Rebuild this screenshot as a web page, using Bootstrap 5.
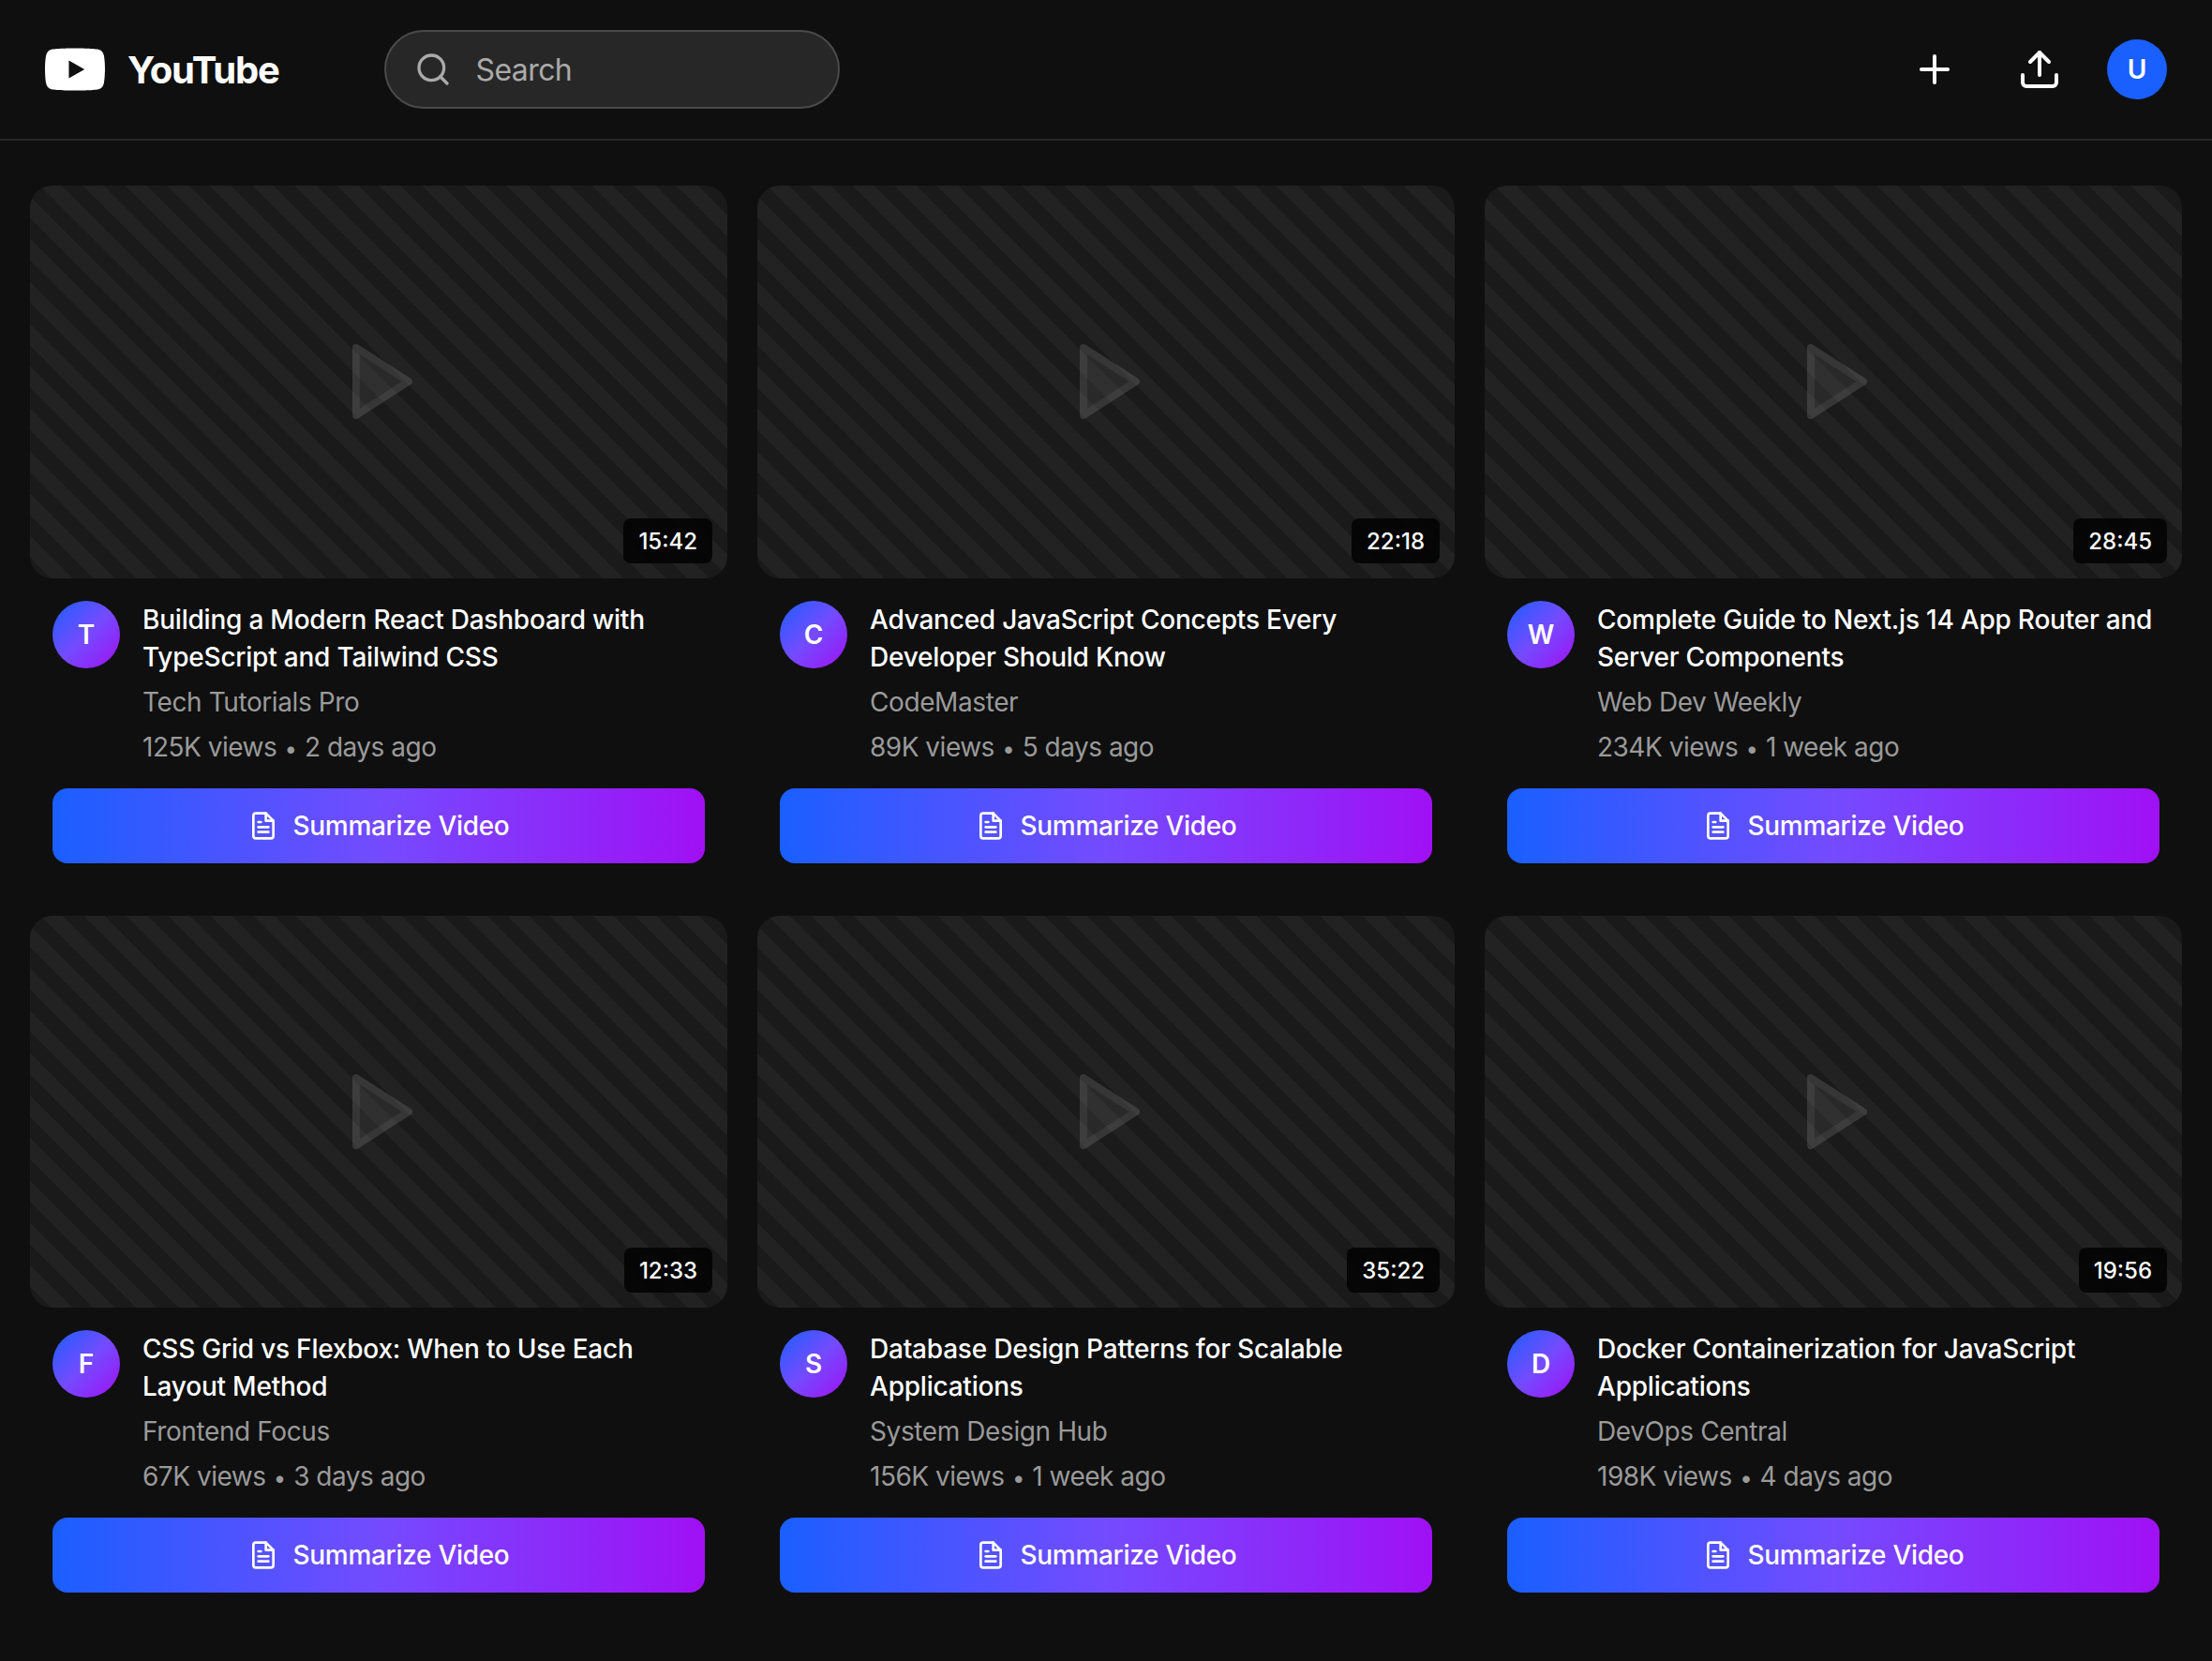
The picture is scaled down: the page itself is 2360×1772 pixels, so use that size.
<!DOCTYPE html>
<html lang="en">
<head>
  <meta charset="UTF-8">
  <title>YouTube</title>
  <link href="https://cdn.jsdelivr.net/npm/bootstrap@5.3.0/dist/css/bootstrap.min.css" rel="stylesheet">
  <style>
    body { background: #0f0f0f; color: #fff; font-family: Inter, "Liberation Sans", sans-serif; }
    .top-bar { height: 150px; padding: 0 48px; border-bottom: 2px solid #272727; }
    .brand-logo { margin-right: 112px; gap: 24px; }
    .brand-name { padding-top: 2px; font-size: 40px; font-weight: 700; letter-spacing: -1.2px; line-height: 1; color: #fff; }
    .search-box { width: 486px; height: 84px; padding: 0 28px 0 30px; gap: 26px; background: #272727; border: 2px solid #4a4a4a; border-radius: 42px; color: #aaa; }
    .search-box .form-control { background: transparent; border: 0; padding: 2px 0 0; font-size: 32px; letter-spacing: -0.6px; color: #fff; box-shadow: none; }
    .search-box .form-control::placeholder { color: #aaa; opacity: 1; }
    .top-actions { gap: 32px; }
    .icon-btn { width: 80px; height: 80px; padding: 16px; background: none; border: 0; color: #fff; line-height: 0; }
    .user-pic { width: 64px; height: 64px; background: #1a5fff; font-size: 28px; font-weight: 600; }
    .video-wrap { padding: 48px 32px 72px; }
    .video-row { --bs-gutter-x: 32px; --bs-gutter-y: 32px; }
    .video-card { background: transparent; border: 0; border-radius: 0; color: #fff; }
    .thumb-box { aspect-ratio: 16 / 9; border-radius: 24px; background: repeating-linear-gradient(45deg, #1a1a1a, #1a1a1a 16px, #222 16px, #222 32px); }
    .play-mark { width: 96px; height: 96px; opacity: .12; fill: #999; stroke: #fff; }
    .time-tag { right: 16px; bottom: 16px; height: 48px; padding: 0 16px; background: rgba(0,0,0,.8); border-radius: 8px; font-size: 24px; font-weight: 500; line-height: 49px; }
    .video-info { padding: 24px; }
    .channel-pic { width: 72px; height: 72px; background: linear-gradient(135deg, #1a5fff, #744bff 50%, #a010f5); font-size: 28px; font-weight: 600; }
    .info-text { gap: 8px; }
    .video-title { font-size: 28px; font-weight: 500; line-height: 40px; letter-spacing: -0.22px; margin: 0; color: #fff; }
    .channel-name, .video-meta { font-size: 28px; line-height: 40px; letter-spacing: -0.4px; color: #9a9a9a; }
    .video-meta { letter-spacing: -0.5px; }
    .video-meta i { font-style: normal; font-size: 24px; line-height: 0; margin: 0 1px; }
    .summary-btn { height: 80px; gap: 16px; margin-top: 24px; background: linear-gradient(90deg, #1a5fff, #744bff 50%, #a010f5); border: 0; border-radius: 16px; color: #fff; font-size: 28px; font-weight: 500; letter-spacing: -0.3px; }
    .summary-btn:hover { color: #fff; }
  </style>
</head>
<body>
  <header class="top-bar d-flex align-items-center">
    <a href="#" class="brand-logo d-flex align-items-center text-decoration-none">
      <svg width="64" height="64" viewBox="0 0 24 24" fill="#fff"><path d="M23.498 6.186a3.016 3.016 0 0 0-2.122-2.136C19.505 3.545 12 3.545 12 3.545s-7.505 0-9.377.505A3.017 3.017 0 0 0 .502 6.186C0 8.07 0 12 0 12s0 3.93.502 5.814a3.016 3.016 0 0 0 2.122 2.136c1.871.505 9.376.505 9.376.505s7.505 0 9.377-.505a3.015 3.015 0 0 0 2.122-2.136C24 15.93 24 12 24 12s0-3.93-.502-5.814zM9.545 15.568V8.432L15.818 12l-6.273 3.568z"/></svg>
      <span class="brand-name">YouTube</span>
    </a>
    <div class="search-box d-flex align-items-center">
      <svg class="flex-shrink-0" width="40" height="40" viewBox="0 0 24 24" fill="none" stroke="currentColor" stroke-width="2" stroke-linecap="round" stroke-linejoin="round"><circle cx="11" cy="11" r="8"/><line x1="21" y1="21" x2="16.650" y2="16.650"/></svg>
      <input type="text" class="form-control" placeholder="Search">
    </div>
    <div class="top-actions d-flex align-items-center ms-auto">
      <button class="icon-btn" type="button"><svg width="48" height="48" viewBox="0 0 24 24" fill="none" stroke="currentColor" stroke-width="2" stroke-linecap="round" stroke-linejoin="round"><line x1="12" y1="5" x2="12" y2="19"/><line x1="5" y1="12" x2="19" y2="12"/></svg></button>
      <button class="icon-btn" type="button"><svg width="48" height="48" viewBox="0 0 24 24" fill="none" stroke="currentColor" stroke-width="2" stroke-linecap="round" stroke-linejoin="round"><path d="M21 15v4a2 2 0 0 1-2 2H5a2 2 0 0 1-2-2v-4"/><polyline points="17 8 12 3 7 8"/><line x1="12" y1="3" x2="12" y2="15"/></svg></button>
      <div class="user-pic rounded-circle d-flex align-items-center justify-content-center">U</div>
    </div>
  </header>

  <main class="video-wrap">
    <div id="video-grid" class="row row-cols-3 video-row"></div>
  </main>

  <script>
    const videos = [
      ["15:42", "T", "Building a Modern React Dashboard with TypeScript and Tailwind CSS", "Tech Tutorials Pro", "125K views", "2 days ago"],
      ["22:18", "C", "Advanced JavaScript Concepts Every Developer Should Know", "CodeMaster", "89K views", "5 days ago"],
      ["28:45", "W", "Complete Guide to Next.js 14 App Router and Server Components", "Web Dev Weekly", "234K views", "1 week ago"],
      ["12:33", "F", "CSS Grid vs Flexbox: When to Use Each Layout Method", "Frontend Focus", "67K views", "3 days ago"],
      ["35:22", "S", "Database Design Patterns for Scalable Applications", "System Design Hub", "156K views", "1 week ago"],
      ["19:56", "D", "Docker Containerization for JavaScript Applications", "DevOps Central", "198K views", "4 days ago"]
    ];

    document.getElementById("video-grid").innerHTML = videos.map(([time, letter, title, channel, views, age]) => `
      <div class="col">
        <div class="card video-card">
          <div class="thumb-box position-relative d-flex align-items-center justify-content-center">
            <svg class="play-mark" viewBox="0 0 24 24" stroke-width="2" stroke-linejoin="round" stroke-linecap="round"><polygon points="6 3 20 12 6 21 6 3"/></svg>
            <span class="time-tag position-absolute">${time}</span>
          </div>
          <div class="video-info">
            <div class="d-flex gap-4">
              <div class="channel-pic rounded-circle flex-shrink-0 d-flex align-items-center justify-content-center">${letter}</div>
              <div class="info-text d-flex flex-column">
                <h3 class="video-title">${title}</h3>
                <div class="channel-name">${channel}</div>
                <div class="video-meta">${views} <i>•</i> ${age}</div>
              </div>
            </div>
            <a href="#" class="btn summary-btn w-100 d-flex align-items-center justify-content-center">
              <svg width="32" height="32" viewBox="0 0 24 24" fill="none" stroke="currentColor" stroke-width="2" stroke-linecap="round" stroke-linejoin="round"><path d="M14 2H6a2 2 0 0 0-2 2v16a2 2 0 0 0 2 2h12a2 2 0 0 0 2-2V8z"/><polyline points="14 2 14 8 20 8"/><line x1="16" y1="13" x2="8" y2="13"/><line x1="16" y1="17" x2="8" y2="17"/><polyline points="10 9 9 9 8 9"/></svg>
              Summarize Video
            </a>
          </div>
        </div>
      </div>`).join("");
  </script>
  <script src="https://cdn.jsdelivr.net/npm/bootstrap@5.3.0/dist/js/bootstrap.bundle.min.js"></script>
</body>
</html>
